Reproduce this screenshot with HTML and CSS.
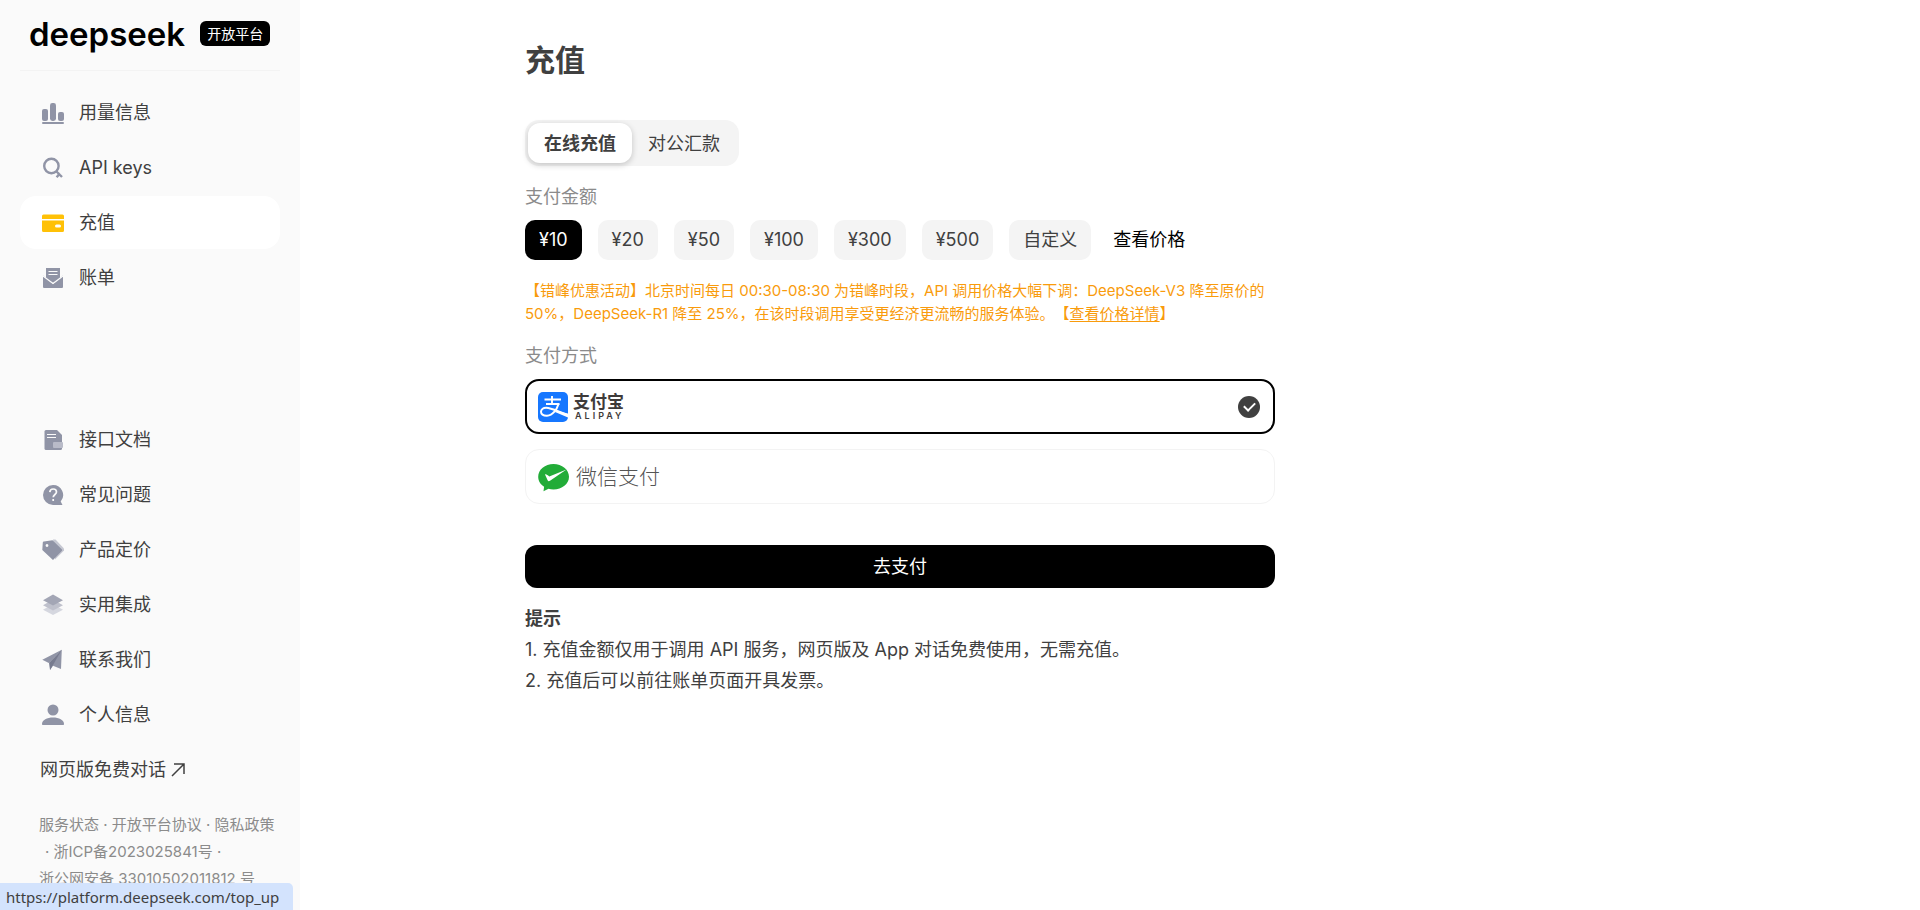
FILE: index.html
```html
<!DOCTYPE html>
<html lang="zh-CN">
<head>
    <meta charset="UTF-8">
    <meta name="viewport" content="width=device-width, initial-scale=1.0">
    <title>DeepSeek 开放平台</title>
    <link rel="stylesheet" href="styles.css">
</head>
<body>
    <aside class="sidebar">
        <a class="brand" href="#">
            <span class="brand-name">deepseek</span>
            <span class="brand-badge">开放平台</span>
        </a>

        <nav class="menu">
            <a class="menu-item" href="#">
                <svg class="icon" viewBox="0 0 22 22"><rect x="0" y="7" width="6" height="12" rx="2"/><rect x="8" y="1" width="6" height="18" rx="2.4"/><rect x="16" y="10" width="6" height="9" rx="2"/><rect x="0" y="20" width="22" height="2" rx="1"/></svg>
                用量信息
            </a>
            <a class="menu-item" href="#">
                <svg class="icon" viewBox="0 0 22 22"><g fill="none" stroke="#9094a6" stroke-width="2.4"><circle cx="9.4" cy="9" r="7.2"/><path d="M14 14l6 6M18 16.400l-3.400 3.800"/></g></svg>
                API keys
            </a>
            <a class="menu-item active" href="#">
                <svg class="icon" viewBox="0 0 22 22"><path d="M1.500 2.500h19A1.500 1.500 0 0 1 22 4v3H0V4a1.500 1.500 0 0 1 1.500-1.500z"/><path fill-rule="evenodd" d="M0 8.500h22v10a1.500 1.500 0 0 1-1.500 1.500h-19A1.500 1.500 0 0 1 0 18.500zM14.500 12.500a1.400 1.400 0 0 0 0 3h3a1.400 1.400 0 0 0 0-3z"/></svg>
                充值
            </a>
            <a class="menu-item" href="#">
                <svg class="icon" viewBox="0 0 22 22"><path d="M4 1h14v10.500l-7 4.500-7-4.500z"/><path d="M1 8.500l10 8.500 10-8.500V20a1 1 0 0 1-1 1H2a1 1 0 0 1-1-1z"/><path d="M1 9l10 7.500L21 9" fill="none" stroke="#fafafa" stroke-width="1.3"/><path d="M6.500 4.500h9M6.500 7.500h9" stroke="#fafafa" stroke-width="1.2"/></svg>
                账单
            </a>
        </nav>

        <nav class="menu menu-bottom">
            <a class="menu-item" href="#">
                <svg class="icon" viewBox="0 0 22 22"><path d="M4 1h11l5 5v13.500a1.500 1.500 0 0 1-1.500 1.500H4a1.500 1.500 0 0 1-1.500-1.500v-17A1.500 1.500 0 0 1 4 1z"/><path d="M5 5.500h9M5 8.500h9" stroke="#fafafa" stroke-width="1.2"/><rect x="11" y="13" width="10" height="6" rx="1" fill="#b9bbc8"/></svg>
                接口文档
            </a>
            <a class="menu-item" href="#">
                <svg class="icon" viewBox="0 0 22 22"><path d="M11 1a10 10 0 1 0 0 20h9.500l-1.800-3.500A10 10 0 0 0 11 1z"/><path d="M7.800 8.200C8 6 9.500 5 11.200 5c1.900 0 3.300 1.200 3.300 3 0 2.400-3.300 2.600-3.300 5.300M11.200 15v2" fill="none" stroke="#fafafa" stroke-width="1.7"/></svg>
                常见问题
            </a>
            <a class="menu-item" href="#">
                <svg class="icon" viewBox="0 0 22 22"><path fill="#c6c8d2" d="M11 .5h2.500L22 9.500v2L13 20.500z"/><path fill-rule="evenodd" d="M1.800 2.500l8.700-1.300 9.500 9.300a1 1 0 0 1 0 1.200L11 21 .3 11 .8 3.500a1 1 0 0 1 1-1zM5 5.100a1.400 1.400 0 1 0 .01 0z"/></svg>
                产品定价
            </a>
            <a class="menu-item" href="#">
                <svg class="icon" viewBox="0 0 22 22"><path fill="#d5d7df" d="M11 10l10 5.800-10 5.200-10-5.200z"/><path fill="#bfc1cc" d="M11 5.500l10 5.800-10 5.200-10-5.200z"/><path fill="#a3a6b5" d="M11 .5l10 5.700-10 5.300L1 6.200z"/></svg>
                实用集成
            </a>
            <a class="menu-item" href="#">
                <svg class="icon" viewBox="0 0 22 22"><path d="M19.800.8L.3 10.700l6.500 3.200zM19.800.8L8 15v6l3-4.300 8 3.300z"/><path fill="#777b8f" d="M19.800.8L7 13.800 8 21l3-5z"/></svg>
                联系我们
            </a>
            <a class="menu-item" href="#">
                <svg class="icon" viewBox="0 0 22 22"><circle cx="11" cy="6" r="5.500"/><path d="M0 20c0-4 5-6.500 11-6.500S22 16 22 20c0 .7-.3 1-1 1H1c-.7 0-1-.3-1-1z"/></svg>
                个人信息
            </a>
            <a class="menu-item chat-link" href="#">
                网页版免费对话
                <svg class="arrow" viewBox="0 0 14 14"><path d="M1 13L13 1M3 1h10v10"/></svg>
            </a>
        </nav>

        <footer class="legal">
            <a href="#">服务状态</a> · <a href="#">开放平台协议</a> · <a href="#">隐私政策</a><br>
            <span class="legal-icp">· <a href="#">浙ICP备2023025841号</a> ·</span><br>
            <a href="#">浙公网安备 33010502011812 号</a>
        </footer>
    </aside>

    <main class="content">
        <h1>充值</h1>

        <div class="tabs">
            <button class="tab active" type="button">在线充值</button>
            <button class="tab" type="button">对公汇款</button>
        </div>

        <h2>支付金额</h2>
        <div class="amounts">
            <button class="amount active" type="button">¥10</button>
            <button class="amount" type="button">¥20</button>
            <button class="amount" type="button">¥50</button>
            <button class="amount" type="button">¥100</button>
            <button class="amount" type="button">¥300</button>
            <button class="amount" type="button">¥500</button>
            <button class="amount" type="button">自定义</button>
            <a class="price-link" href="#">查看价格</a>
        </div>

        <p class="notice">【错峰优惠活动】北京时间每日 00:30-08:30 为错峰时段，API 调用价格大幅下调：DeepSeek-V3 降至原价的 50%，DeepSeek-R1 降至 25%，在该时段调用享受更经济更流畅的服务体验。【<a href="#">查看价格详情</a>】</p>

        <h2>支付方式</h2>
        <div class="methods">
            <label class="method">
                <svg class="pay-icon" viewBox="0 0 30 30">
                    <rect width="30" height="30" rx="5" fill="#1677ff"/>
                    <path d="M14 4v8M6.500 7.500h16.500M8 12h13.500" fill="none" stroke="#fff" stroke-width="1.9"/>
                    <path d="M20.500 12c-1.500 5-5.500 11.500-11.500 11.700-4 .1-6-1.700-6-4 0-2.600 2.500-4 5.300-3.900C13 16 19 19 30 22.700" fill="none" stroke="#fff" stroke-width="2"/>
                    <path d="M18 18L30 22v3.500l-13-5.500z" fill="#fff"/>
                </svg>
                <span class="alipay">
                    <span class="alipay-cn">支付宝</span>
                    <span class="alipay-en">ALIPAY</span>
                </span>
                <input type="radio" name="method" value="alipay" checked>
            </label>
            <label class="method">
                <svg class="pay-icon" viewBox="0 0 30 30">
                    <path d="M15.500 2C24 2 31 7.500 31 14.800S24 27.500 15.500 27.500c-1.800 0-3.500-.2-5-.7L5.500 29.300l.6-4.600C2.500 22.500.2 19 .2 14.800.2 7.500 7 2 15.500 2z" fill="#22ac38"/>
                    <path d="M7 12.500c1-.8 2.200.4 4.300 1.900L28.500 7.500 12 18.800c-1.200.8-2 .4-2.500-.8z" fill="#fff"/>
                </svg>
                <span class="wechat">微信支付</span>
                <input type="radio" name="method" value="wechat">
            </label>
        </div>

        <button class="pay" type="button">去支付</button>

        <section class="tips">
            <h3>提示</h3>
            <p>1. 充值金额仅用于调用 API 服务，网页版及 App 对话免费使用，无需充值。</p>
            <p>2. 充值后可以前往账单页面开具发票。</p>
        </section>
    </main>

    <div class="status-bar">https://platform.deepseek.com/top_up</div>
</body>
</html>
```
FILE: styles.css
```css
* {
    box-sizing: border-box;
}
body {
    margin: 0;
    display: flex;
    min-height: 100vh;
    background: #ffffff;
    color: #404040;
    font-family: Inter, "Noto Sans CJK SC", sans-serif;
    font-size: 18px;
    line-height: 30px;
    text-spacing-trim: space-all;
}
a {
    color: inherit;
    text-decoration: none;
}
button {
    border: none;
    font: inherit;
    color: inherit;
    cursor: pointer;
}
h1, h2, h3, p {
    margin: 0;
}

/* sidebar */
.sidebar {
    display: flex;
    flex-direction: column;
    flex-shrink: 0;
    width: 300px;
    min-height: 100vh;
    padding: 0 20px 18px;
    background: #fafafa;
}
.brand {
    display: flex;
    align-items: center;
    gap: 15px;
    height: 71px;
    padding: 0 9px 3px;
    border-bottom: 1px solid #f3f3f3;
    color: #000000;
}
.brand-name {
    font-size: 33px;
    font-weight: 600;
}
.brand-badge {
    padding: 0 7px;
    border-radius: 6px;
    background: #000000;
    color: #ffffff;
    font-size: 14px;
    line-height: 25px;
    white-space: nowrap;
}
.menu {
    display: flex;
    flex-direction: column;
    gap: 2px;
    padding-top: 15px;
}
.menu-bottom {
    margin-top: auto;
}
.menu-item {
    display: flex;
    align-items: center;
    gap: 15px;
    height: 53px;
    padding: 0 22px;
    border-radius: 16px;
}
.menu-item.active {
    background: #ffffff;
}
.icon {
    width: 22px;
    height: 22px;
    fill: #9094a6;
}
.active .icon {
    fill: #ffc107;
}
.chat-link {
    gap: 5px;
    padding: 0 20px;
}
.arrow {
    width: 14px;
    height: 14px;
    fill: none;
    stroke: #404040;
    stroke-width: 1.5;
}
.legal {
    margin-top: 15px;
    padding-left: 19px;
    color: #8b8b8b;
    font-size: 15px;
    line-height: 27px;
    white-space: nowrap;
}
.legal-icp {
    padding-left: 6px;
}

/* top up page */
.content {
    flex: 1;
    max-width: 1200px;
    padding: 37px 225px 40px;
}
h1 {
    font-size: 30px;
    line-height: 46px;
}
h2 {
    color: #8b8b8b;
    font-size: 18px;
    font-weight: 400;
}
.tabs {
    display: inline-flex;
    margin: 37px 0 16px;
    padding: 3px;
    border-radius: 14px;
    background: #f4f4f4;
    vertical-align: top;
}
.tab {
    height: 40px;
    padding: 2px 16px 0;
    border-radius: 12px;
    background: transparent;
}
.tab.active {
    background: #ffffff;
    box-shadow: 0 2px 6px rgba(0, 0, 0, 0.2);
    font-weight: 700;
}
.amounts {
    display: flex;
    align-items: center;
    gap: 16px;
    margin-top: 8px;
}
.amount {
    height: 40px;
    padding: 0 14px;
    border-radius: 10px;
    background: #f4f4f4;
}
.amount.active {
    background: #000000;
    color: #ffffff;
}
.price-link {
    padding: 0 6px;
    color: #000000;
}
.notice {
    margin: 19px 0 16px;
    color: #f99b0c;
    font-size: 15px;
    line-height: 23px;
}
.notice a {
    text-decoration: underline;
    text-underline-offset: 2px;
}
.methods {
    display: flex;
    flex-direction: column;
    gap: 15px;
    margin-top: 8px;
}
.method {
    display: flex;
    align-items: center;
    height: 55px;
    padding: 0 12px;
    border: 1px solid #f3f3f3;
    border-radius: 14px;
    cursor: pointer;
}
.method:has(input:checked) {
    padding: 0 11px;
    border: 2px solid #000000;
}
.pay-icon {
    width: 30px;
    height: 30px;
    margin-right: 5px;
    overflow: visible;
}
.alipay {
    display: flex;
    flex-direction: column;
    color: #3e3a39;
    font-weight: 700;
}
.alipay-cn {
    font-size: 17px;
    line-height: 18px;
}
.alipay-en {
    padding-left: 2px;
    font-size: 9px;
    font-weight: 600;
    line-height: 10px;
    letter-spacing: 3px;
}
.wechat {
    padding-left: 3px;
    color: #555555;
    font-size: 21px;
    font-weight: 300;
}
.method input {
    appearance: none;
    display: flex;
    align-items: center;
    justify-content: center;
    width: 22px;
    height: 22px;
    margin: 0 2px 0 auto;
    border-radius: 50%;
}
.method input:checked {
    background: #404040;
}
.method input:checked::after {
    content: "";
    width: 9px;
    height: 5px;
    margin-bottom: 3px;
    border: solid #ffffff;
    border-width: 0 0 2px 2px;
    transform: rotate(-45deg);
}
.pay {
    display: block;
    width: 100%;
    height: 43px;
    margin: 41px 0 15px;
    border-radius: 12px;
    background: #000000;
    color: #ffffff;
}
.tips {
    line-height: 31px;
}
.tips h3 {
    font-size: 18px;
}

/* link preview in the corner of the window */
.status-bar {
    position: fixed;
    left: 0;
    bottom: 0;
    padding: 1px 14px 0 6px;
    border-top-right-radius: 5px;
    background: #d3e3fd;
    font-family: "Noto Sans", sans-serif;
    font-size: 15px;
    line-height: 26px;
}
```
